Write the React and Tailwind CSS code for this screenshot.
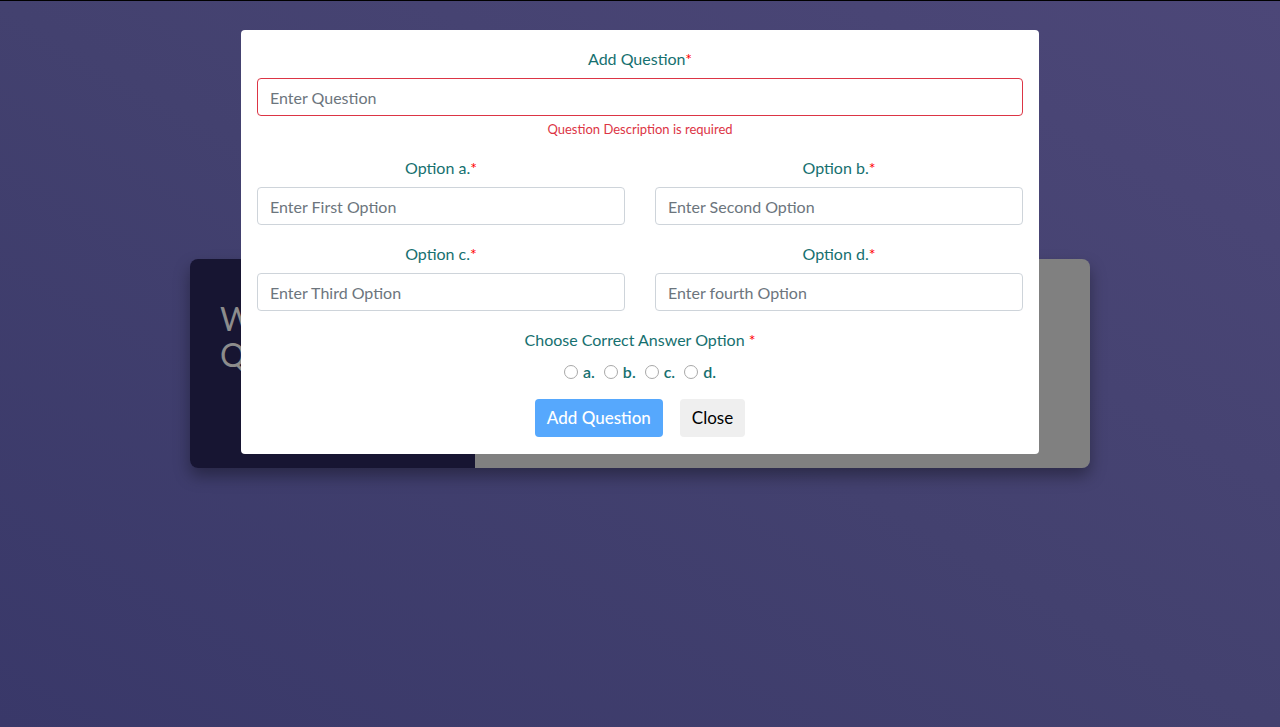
import { useState } from "react";

// Option inputs shown in the two-column grid
const options = [
  { label: "a.", placeholder: "Enter First Option" },
  { label: "b.", placeholder: "Enter Second Option" },
  { label: "c.", placeholder: "Enter Third Option" },
  { label: "d.", placeholder: "Enter fourth Option" },
];

const Label = ({ children }) => (
  <div className="text-center text-[16px] leading-6 text-[#16706f]">
    {children}
    <span className="text-[#ff0000]">*</span>
  </div>
);

const App = () => {
  const [answer, setAnswer] = useState("");

  return (
    <div
      className="relative min-h-[727px] w-full border-t border-black bg-[linear-gradient(to_top_right,#393869_0%,#43416f_50%,#4c4778_100%)]"
      style={{ fontFamily: "Lato, 'Noto Sans', sans-serif" }}
    >
      {/* Card behind the modal */}
      <div className="pt-[258px]">
        <div className="mx-auto flex h-[209px] w-[900px] rounded-lg shadow-[0_8px_16px_rgba(0,0,0,0.35)]">
          <div className="w-[285px] rounded-l-lg bg-[#171532] px-[30px] pt-[42px] text-[32px] leading-9 text-[#8c8c8c]">
            <div>Welcome</div>
            <div>Quiz</div>
          </div>
          <div className="flex-1 rounded-r-lg bg-[#808080]" />
        </div>
      </div>

      {/* Modal */}
      <div className="absolute inset-x-0 top-[29px] flex justify-center">
        <div className="w-[798px] rounded bg-white px-4 pt-[17px] pb-[17px]">
          <Label>Add Question</Label>
          <input
            className="mt-[7px] block h-[38px] w-full rounded border border-[#dc3545] px-3 text-[16px] text-[#495057] placeholder:text-[#6c757d] outline-none"
            placeholder="Enter Question"
          />
          <div className="mt-[4px] text-center text-[13px] leading-[18px] text-[#dc3545]">
            Question Description is required
          </div>

          <div className="mt-[18px] grid grid-cols-2 gap-x-[30px] gap-y-[17px]">
            {options.map((opt) => (
              <div key={opt.label}>
                <Label>Option {opt.label}</Label>
                <input
                  className="mt-[7px] block h-[38px] w-full rounded border border-[#ced4da] px-3 text-[16px] text-[#495057] placeholder:text-[#6c757d] outline-none"
                  placeholder={opt.placeholder}
                />
              </div>
            ))}
          </div>

          <div className="mt-[17px] text-center text-[16px] leading-6 text-[#16706f]">
            Choose Correct Answer Option <span className="text-[#ff0000]">*</span>
          </div>
          <div className="mt-[10px] flex items-center justify-center gap-[9px] text-[16px] font-semibold leading-5 text-[#16706f]">
            {["a.", "b.", "c.", "d."].map((l) => (
              <label key={l} className="flex items-center gap-[5px]">
                <input
                  type="radio"
                  name="answer"
                  checked={answer === l}
                  onChange={() => setAnswer(l)}
                  className="m-0 h-[14px] w-[14px] appearance-none rounded-full border border-[#a8a8a8] bg-white checked:border-[4px] checked:border-[#0075ff]"
                />
                {l}
              </label>
            ))}
          </div>

          <div className="mt-[17px] flex justify-center gap-[17px]">
            <button className="h-[38px] rounded bg-[#56a8fd] px-3 text-[17px] font-medium text-white">
              Add Question
            </button>
            <button className="h-[38px] rounded bg-[#efefef] px-3 text-[17px] text-black">
              Close
            </button>
          </div>
        </div>
      </div>
    </div>
  );
};

export default App;
